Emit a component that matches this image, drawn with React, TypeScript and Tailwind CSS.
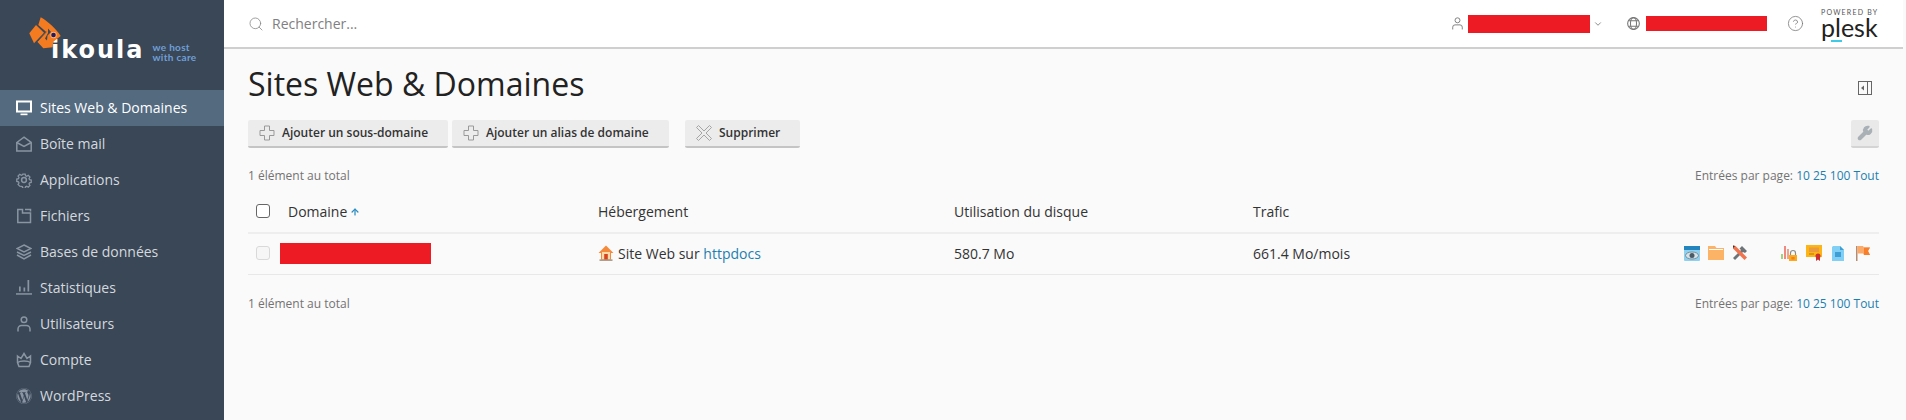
import React from "react";
import { Search, ChevronDown, ArrowUp, Wrench, CircleHelp } from "lucide-react";
import { FaWordpress } from "react-icons/fa";

const ic = "w-4 h-4 shrink-0";
const stroke = { fill: "none", stroke: "currentColor", strokeWidth: 1.5 };

const MonitorI = () => (
  <svg viewBox="0 0 16 16" className={ic}>
    <rect x="1" y="1.500" width="14" height="10" fill="none" stroke="currentColor" strokeWidth="2" />
    <rect x="4.500" y="13.500" width="7" height="1.700" fill="currentColor" />
  </svg>
);
const MailI = () => (
  <svg viewBox="0 0 16 16" className={ic} {...stroke}>
    <path d="M.8 6.500 8 1.200l7.200 5.300v8.500H.8z" />
    <path d="M.8 6.500 8 10.500l7.200-4" />
  </svg>
);
const GearI = () => (
  <svg viewBox="0 0 16 16" className={ic} {...stroke}>
    <path d="M6.600 1h2.800l.4 2 1.400.6 1.800-1.100 2 2-1.100 1.800.6 1.400 2 .4v2.800l-2 .4-.6 1.400 1.100 1.800-2 2-1.800-1.100-1.400.6-.4 2H6.600l-.4-2-1.400-.6L3 15.300l-2-2 1.100-1.800-.6-1.400-2-.4V6.900l2-.4.6-1.400L1 3.300l2-2 1.800 1.100 1.400-.6z" transform="translate(1.200 1.200) scale(.85)" />
    <circle cx="8" cy="8" r="2.400" />
  </svg>
);
const FolderI = () => (
  <svg viewBox="0 0 16 16" className={ic} {...stroke}>
    <path d="M1.800 1.500h4.700v3.500h8v9.500H1.800zM9 1.500h5.500V3.500" />
  </svg>
);
const LayersI = () => (
  <svg viewBox="0 0 16 16" className={ic} {...stroke}>
    <path d="M8 1 15 4.500 8 8 1 4.500z" />
    <path d="M1 8 8 11.500 15 8" />
    <path d="M1 11 8 14.800 15 11" />
  </svg>
);
const StatsI = () => (
  <svg viewBox="0 0 16 16" className={ic} fill="currentColor">
    <rect x="0" y="13.200" width="16" height="1.500" />
    <rect x="3" y="6.500" width="1.700" height="5" />
    <rect x="7.500" y="7.500" width="1.700" height="4" />
    <rect x="11.500" y="0" width="1.700" height="11.500" />
  </svg>
);
const UserI = () => (
  <svg viewBox="0 0 16 16" className={ic} {...stroke}>
    <circle cx="8" cy="3.800" r="2.800" />
    <path d="M2 15.500v-2.500a3.500 3.500 0 0 1 3.500-3.500h5a3.500 3.500 0 0 1 3.500 3.500v2.500" />
  </svg>
);
const CrownI = () => (
  <svg viewBox="0 0 16 16" className={ic} {...stroke}>
    <path d="M1.500 4 5 6.500 8 1.500l3 5L14.500 4v6.500l-1.500 4H3l-1.500-4z" />
    <path d="M1.500 10.500C4 8.500 12 8.500 14.500 10.500" />
  </svg>
);
const WpI = () => <FaWordpress className={ic} />;

const nav: [string, React.FC][] = [
  ["Sites Web & Domaines", MonitorI],
  ["Boîte mail", MailI],
  ["Applications", GearI],
  ["Fichiers", FolderI],
  ["Bases de données", LayersI],
  ["Statistiques", StatsI],
  ["Utilisateurs", UserI],
  ["Compte", CrownI],
  ["WordPress", WpI],
];

const Fish = () => (
  <svg viewBox="0 0 32 38" className="absolute left-0 top-0 w-[32px] h-[38px]">
    <path d="M.3 16.300 7 8l8 7.700L5 26.300z" fill="#f47b20" />
    <path d="M11.700 .3C20 5 27 12 31.700 19l-7.400 5.700-.6 5.600-9.400 1-6-6.600L17 14.700 9.300 8z" fill="#f47b20" />
    <path d="M17.500 14.700 8.300 24.700" stroke="#3a4757" strokeWidth=".8" fill="none" />
    <path d="M19 11.500 22 15l-3.500 3.500-.5 5 -2-2 3-5.500z" fill="#3a4757" />
    <circle cx="24.500" cy="18" r="3.200" fill="#f9b27a" />
    <circle cx="24.500" cy="18" r="2.300" fill="#241a5c" />
  </svg>
);

const Plus = () => (
  <svg viewBox="0 0 16 16" className="w-4 h-4 shrink-0" fill="none" stroke="#999" strokeWidth="1">
    <path d="M5.500 1h5v4.500h4.500v5h-4.500V15h-5v-4.500H1v-5h4.500z" />
  </svg>
);
const Cross = () => (
  <svg viewBox="0 0 16 16" className="w-4 h-4 shrink-0" fill="none" stroke="#a5a5a5" strokeWidth="1">
    <path d="M2.500 .5 8 6l5.500-5.500 2 2L10 8l5.500 5.500-2 2L8 10l-5.500 5.500-2-2L6 8 .5 2.500z" />
  </svg>
);

const Btn = ({ w, icon, label }: { w: string; icon: React.ReactNode; label: string }) => (
  <div className={`${w} h-[28px] shrink-0 flex items-center gap-[7px] pl-[11px] bg-[#ececec] border-b-2 border-[#c4c4c4] rounded-[2px] text-[12px] font-semibold text-[#333] whitespace-nowrap`}>
    {icon}
    <span>{label}</span>
  </div>
);

const Pager = () => (
  <span className="text-[12px] text-[#737373]">
    Entrées par page: <span className="text-[#1d7fb0]">10 25 100 Tout</span>
  </span>
);

const Redact = ({ c }: { c: string }) => <div className={`${c} shrink-0 bg-[#ed1c24]`} />;

const Home = () => (
  <svg viewBox="0 0 16 16" className="w-[16px] h-[16px] shrink-0">
    <path d="M8 .5 15.500 8H13v6.500H3V8H.5z" fill="#f58a3c" />
    <rect x="4" y="7" width="8" height="7.500" fill="#fbd9a8" />
    <rect x="6.200" y="9" width="3.600" height="5.500" fill="#d8431f" />
    <rect x="1.500" y="14.500" width="13" height="1.200" fill="#8a7a66" />
  </svg>
);

const RowIcons = () => (
  <div className="flex items-center justify-end pr-[9px]">
    <svg viewBox="0 0 16 15" className="w-4 h-[15px] mr-2">
      <rect width="16" height="15" rx="1" fill="#8fd0ef" />
      <rect width="16" height="4" fill="#2484bd" />
      <ellipse cx="8" cy="9.500" rx="6.500" ry="3.500" fill="#d6e4ea" stroke="#6d7b84" strokeWidth=".8" />
      <circle cx="8" cy="9.500" r="2.500" fill="#4a5a66" />
    </svg>
    <svg viewBox="0 0 16 14" className="w-4 h-[14px] mr-2">
      <path d="M0 0h7l1.500 2H16v12H0z" fill="#fdb365" />
      <rect x="1" y="3" width="14" height="1" fill="#fff" />
    </svg>
    <svg viewBox="0 0 16 16" className="w-4 h-4 mr-[33px]">
      <path d="M1 13 9 5 7.500 3.500 10 1l5 5-2 2-2-1-8 8z" fill="#6d7478" />
      <path d="M1 .5 3.500 1 15 12.500 12.500 15 1 3.500z" fill="#f0744f" />
      <path d="M1 .5 3 1 1 3z" fill="#333" />
    </svg>
    <svg viewBox="0 0 16 16" className="w-4 h-4 mr-[9px]">
      <rect x="0" y="9" width="2" height="5" fill="#a4d27a" />
      <rect x="3" y="1" width="2" height="13" fill="#ee8a82" />
      <rect x="6" y="4" width="2" height="10" fill="#f0a48c" />
      <path d="M9.500 10V8a2.500 2.500 0 0 1 5 0v2" fill="none" stroke="#8a8a8a" strokeWidth="1.200" />
      <rect x="8" y="10" width="8" height="6" fill="#fba91e" />
      <rect x="10.500" y="12" width="3" height="2.500" fill="#f57f17" />
    </svg>
    <svg viewBox="0 0 16 16" className="w-4 h-4 mr-[10px]">
      <rect x="0" y="0" width="16" height="12" fill="#fdb515" />
      <rect x="3" y="2.500" width="10" height="4.500" fill="#eb9b3c" />
      <rect x="3" y="8.500" width="5" height="1" fill="#b8741c" />
      <circle cx="12" cy="11" r="2.500" fill="#cf2e2e" />
      <path d="M10 12v4l2-1.500 2 1.500v-4z" fill="#cf2e2e" />
    </svg>
    <svg viewBox="0 0 12 15" className="w-3 h-[15px] mr-[12px]">
      <path d="M1 0h7l4 4v11H0V1z" fill="#82cff5" />
      <path d="M8 0l4 4H8z" fill="#3f9fd4" />
      <rect x="3" y="6" width="6" height="5" fill="#3f9fd4" />
    </svg>
    <svg viewBox="0 0 14 15" className="w-[14px] h-[15px]">
      <rect width="1.500" height="15" fill="#b58b72" />
      <path d="M1.500 0 H7 L8 1.500 H14 L12 5 L14 9 H8 L7 7.500 H1.500z" fill="#fbaa6a" />
      <path d="M8 1.500 H14 L12 5 L14 9 H8z" fill="#f97e2a" />
    </svg>
  </div>
);

const gridCols = "grid grid-cols-[350px_356px_299px_1fr] items-center";

export default function App() {
  return (
    <div className="flex w-full h-[420px] overflow-hidden bg-[#fafafa] text-[#222] font-['Open_Sans',sans-serif]">
      <aside className="w-[224px] shrink-0 bg-[#3a4757] flex flex-col">
        <div className="h-[90px] pl-[29px] pt-[17px]">
          <div className="relative h-[44px]">
            <div className="flex items-start pl-[22px] pt-[21px]">
              <span className="font-['DejaVu_Sans',sans-serif] font-bold text-[24px] leading-[24px] text-white tracking-[2px]">ikoula</span>
              <span className="font-['Lato',sans-serif] font-bold text-[10px] leading-[10px] text-[#6f9fd8] ml-[8px] mt-[4px] tracking-[0.300px] whitespace-nowrap">we host<br />with care</span>
            </div>
            <Fish />
          </div>
        </div>
        <nav className="flex flex-col">
          {nav.map(([label, I], i) => (
            <div key={label} className={i === 0 ? "h-[36px] flex items-center gap-[8px] pl-[16px] bg-[#536a7f] text-white text-[14px]" : "h-[36px] flex items-center gap-[8px] pl-[16px] text-[#d4d9de] text-[14px]"}>
              <span className={i === 0 ? "text-white" : "text-[#8a95a2]"}><I /></span>
              <span className="-mt-[2px]">{label}</span>
            </div>
          ))}
        </nav>
      </aside>
      <div className="flex-1 flex flex-col min-w-0 pr-[3px]">
        <header className="h-[49px] bg-white border-b-2 border-[#cfcfcf] flex items-center pl-[24px] pr-[23px] shrink-0">
          <Search className="w-4 h-4 text-[#888] shrink-0" strokeWidth={1.200} />
          <span className="ml-[8px] text-[14px] text-[#808080]">Rechercher...</span>
          <div className="flex-1" />
          <svg viewBox="0 0 12 14" className="w-[11px] h-[13px] shrink-0" fill="none" stroke="#777" strokeWidth="1">
            <circle cx="6" cy="3.500" r="2.700" />
            <path d="M.8 13.500V11a2.500 2.500 0 0 1 2.500-2.500h5.400A2.500 2.500 0 0 1 11.200 11v2.500" />
          </svg>
          <Redact c="w-[122px] h-[18px] ml-[5px]" />
          <ChevronDown className="w-[10px] h-[10px] text-[#777] ml-[3px] shrink-0" />
          <svg viewBox="0 0 12 12" className="w-[13px] h-[13px] ml-[24px] shrink-0" fill="none" stroke="#777" strokeWidth="1">
            <circle cx="6" cy="6" r="5.400" />
            <ellipse cx="6" cy="6" rx="2.800" ry="5.400" />
            <path d="M1.500 3.500h9M1.500 8.500h9" />
          </svg>
          <Redact c="w-[121px] h-[15px] ml-[6px]" />
          <CircleHelp className="w-[17px] h-[17px] text-[#777] ml-[20px] shrink-0" strokeWidth={1.100} />
          <div className="ml-[17px] flex flex-col w-[59px] shrink-0">
            <span className="font-['Lato',sans-serif] text-[7px] leading-[8px] tracking-[1.200px] text-[#555] whitespace-nowrap">POWERED BY</span>
            <span className="relative font-['Lato',sans-serif] text-[25px] leading-[23px] text-[#222]">plesk
              <span className="absolute left-[10px] bottom-[-3px] w-[11px] h-[2px] bg-[#3dcbe8]" />
            </span>
          </div>
        </header>
        <main className="flex-1 pl-[24px] pr-[24px] pt-[14px]">
          <div className="flex items-start justify-between h-[57px]">
            <h1 className="text-[32px] leading-[42px] font-normal text-[#222]">Sites Web & Domaines</h1>
            <svg viewBox="0 0 14 14" className="w-[14px] h-[14px] mt-[18px] mr-[7px]" fill="none" stroke="#666" strokeWidth="1">
              <rect x=".5" y=".5" width="13" height="13" />
              <path d="M9.500 .5v13" />
              <path d="M6 4.500v5L3 7z" fill="#666" stroke="none" />
            </svg>
          </div>
          <div className="flex items-center">
            <Btn w="w-[200px]" icon={<Plus />} label="Ajouter un sous-domaine" />
            <div className="w-[4px] shrink-0" />
            <Btn w="w-[217px]" icon={<Plus />} label="Ajouter un alias de domaine" />
            <div className="w-[16px] shrink-0" />
            <Btn w="w-[115px]" icon={<Cross />} label="Supprimer" />
            <div className="flex-1" />
            <div className="w-[28px] h-[28px] bg-[#e9e9e9] border-b-2 border-[#d4d4d4] rounded-[2px] flex items-center justify-center">
              <Wrench className="w-4 h-4 text-[#a9b1b6]" fill="#a9b1b6" />
            </div>
          </div>
          <div className="flex items-center justify-between h-[20px] mt-[18px] text-[12px] text-[#737373]">
            <span>1 élément au total</span>
            <Pager />
          </div>
          <div className={`${gridCols} h-[46px] mt-[2px] pt-[2px] text-[14px] text-[#333] border-b-2 border-[#eeeeee]`}>
            <div className="flex items-center pl-[8px]">
              <div className="w-[14px] h-[14px] rounded-[3px] border border-[#666] bg-white" />
              <span className="ml-[18px]">Domaine</span>
              <ArrowUp className="ml-[3px] w-[10px] h-[10px] text-[#2b8cc0] mt-[2px]" strokeWidth={3} />
            </div>
            <div>Hébergement</div>
            <div>Utilisation du disque</div>
            <div>Trafic</div>
          </div>
          <div className={`${gridCols} h-[41px] pb-[2px] text-[14px] text-[#333] border-b border-[#e8e8e8]`}>
            <div className="flex items-center pl-[8px]">
              <div className="w-[14px] h-[14px] rounded-[3px] border border-[#d9d9d9] bg-[#f6f6f6]" />
              <Redact c="w-[151px] h-[21px] ml-[10px]" />
            </div>
            <div className="flex items-center gap-[4px]">
              <Home />
              <span>Site Web sur <span className="text-[#1d7fb0]">httpdocs</span></span>
            </div>
            <div>580.7 Mo</div>
            <div className="flex items-center justify-between">
              <span>661.4 Mo/mois</span>
              <RowIcons />
            </div>
          </div>
          <div className="flex items-center justify-between h-[20px] mt-[19px] text-[12px] text-[#737373]">
            <span>1 élément au total</span>
            <Pager />
          </div>
        </main>
      </div>
    </div>
  );
}
